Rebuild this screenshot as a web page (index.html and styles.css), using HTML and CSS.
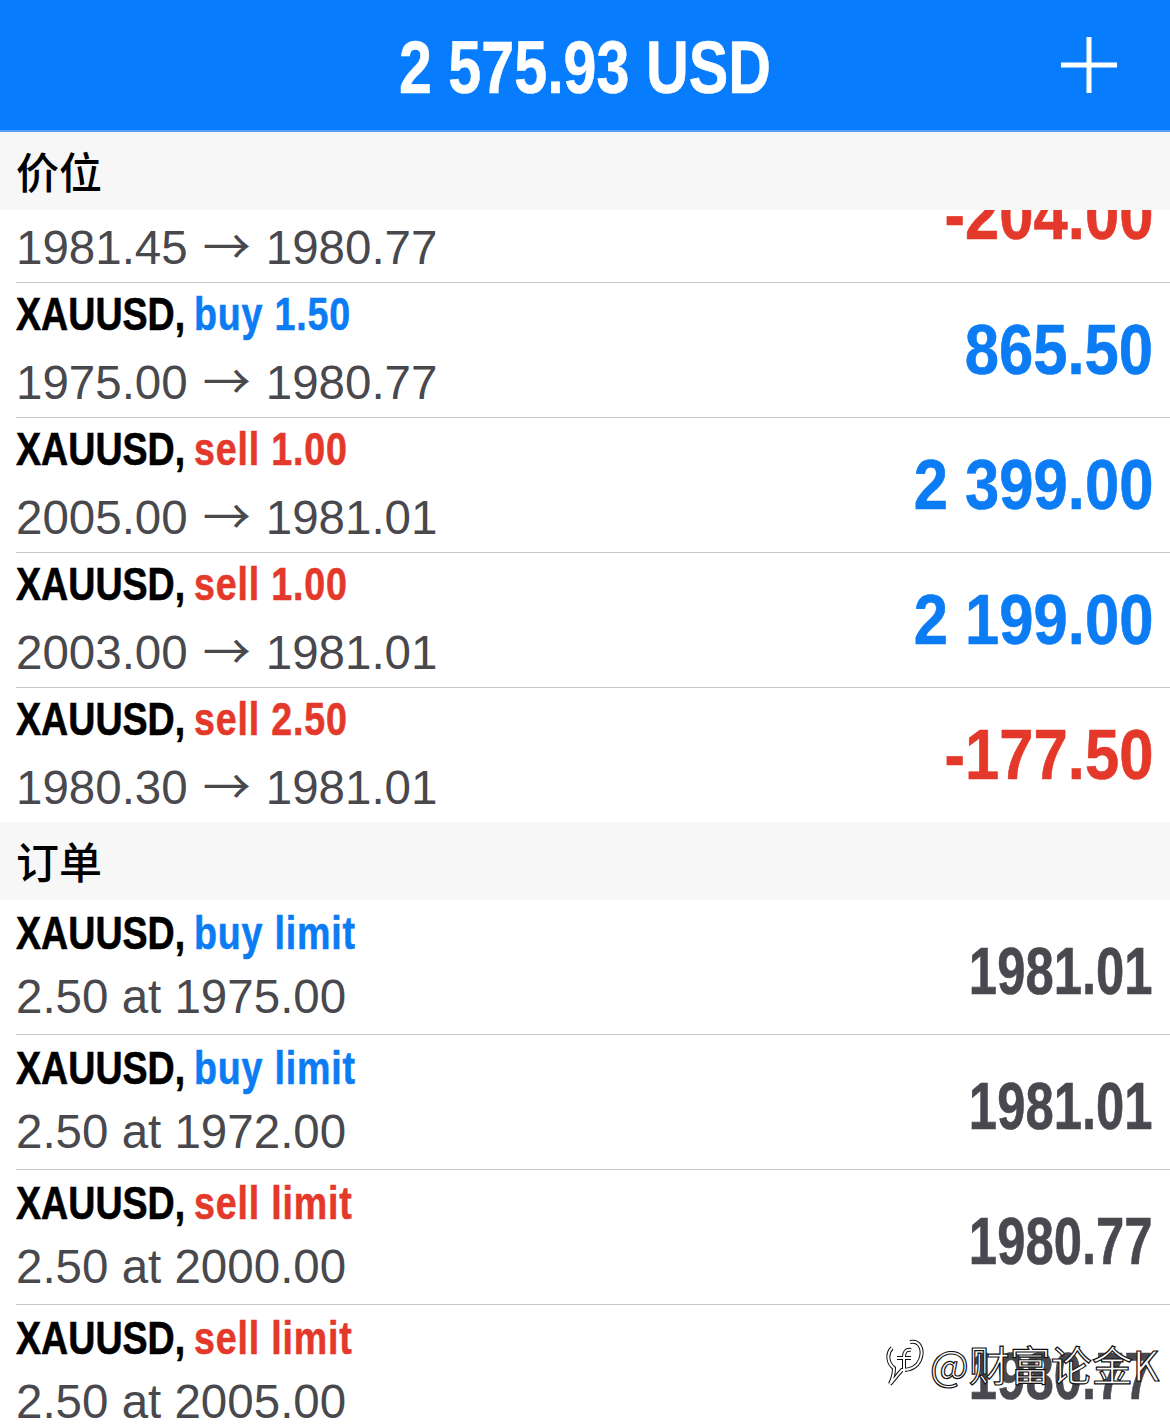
FILE: index.html
```html
<!DOCTYPE html>
<html lang="zh">
<head>
    <meta charset="UTF-8">
    <title>交易</title>
    <link rel="stylesheet" href="styles.css">
</head>
<body>
<div class="screen">
    <header class="topbar">
        <div></div>
        <div class="balance"><span class="sq">2 575.93 USD</span></div>
        <div class="add">
            <svg width="56" height="56" viewBox="0 0 56 56">
                <path d="M28 0V56M0 28H56" stroke="#fff" stroke-width="5"/>
            </svg>
        </div>
    </header>

    <div class="group-title">价位</div>
    <div class="clip">
        <div class="row">
            <div class="info">
                <div class="name"><span class="sq">XAUUSD, <span class="red">sell 1.00</span></span></div>
                <div class="price">1981.45<span class="arrow">→</span>1980.77</div>
            </div>
            <div class="profit red"><span class="sq">-204.00</span></div>
        </div>
    </div>
    <div class="row">
        <div class="info">
            <div class="name"><span class="sq">XAUUSD, <span class="blue">buy 1.50</span></span></div>
            <div class="price">1975.00<span class="arrow">→</span>1980.77</div>
        </div>
        <div class="profit blue"><span class="sq">865.50</span></div>
    </div>
    <div class="row">
        <div class="info">
            <div class="name"><span class="sq">XAUUSD, <span class="red">sell 1.00</span></span></div>
            <div class="price">2005.00<span class="arrow">→</span>1981.01</div>
        </div>
        <div class="profit blue"><span class="sq">2 399.00</span></div>
    </div>
    <div class="row">
        <div class="info">
            <div class="name"><span class="sq">XAUUSD, <span class="red">sell 1.00</span></span></div>
            <div class="price">2003.00<span class="arrow">→</span>1981.01</div>
        </div>
        <div class="profit blue"><span class="sq">2 199.00</span></div>
    </div>
    <div class="row last">
        <div class="info">
            <div class="name"><span class="sq">XAUUSD, <span class="red">sell 2.50</span></span></div>
            <div class="price">1980.30<span class="arrow">→</span>1981.01</div>
        </div>
        <div class="profit red"><span class="sq">-177.50</span></div>
    </div>

    <div class="group-title">订单</div>
    <div class="row">
        <div class="info">
            <div class="name"><span class="sq">XAUUSD, <span class="blue">buy limit</span></span></div>
            <div class="price">2.50 at 1975.00</div>
        </div>
        <div class="quote"><span class="sq">1981.01</span></div>
    </div>
    <div class="row">
        <div class="info">
            <div class="name"><span class="sq">XAUUSD, <span class="blue">buy limit</span></span></div>
            <div class="price">2.50 at 1972.00</div>
        </div>
        <div class="quote"><span class="sq">1981.01</span></div>
    </div>
    <div class="row">
        <div class="info">
            <div class="name"><span class="sq">XAUUSD, <span class="red">sell limit</span></span></div>
            <div class="price">2.50 at 2000.00</div>
        </div>
        <div class="quote"><span class="sq">1980.77</span></div>
    </div>
    <div class="row">
        <div class="info">
            <div class="name"><span class="sq">XAUUSD, <span class="red">sell limit</span></span></div>
            <div class="price">2.50 at 2005.00</div>
        </div>
        <div class="quote"><span class="sq">1980.77</span></div>
    </div>

    <div class="mark">
        <svg width="40" height="54" viewBox="0 0 40 54">
            <path class="mark-o" d="M24 6C34 4 38 14 34 24C31 31 24 34 16 34C12 38 8 44 4 48C7 42 8 37 8 32C2 28 0 18 6 12"/>
            <path class="mark-o" d="M25 14C20 13 18 16 18 21V36M11 22H25"/>
            <path class="mark-i" d="M24 6C34 4 38 14 34 24C31 31 24 34 16 34C12 38 8 44 4 48C7 42 8 37 8 32C2 28 0 18 6 12"/>
            <path class="mark-i" d="M25 14C20 13 18 16 18 21V36M11 22H25"/>
        </svg>
        <span>@财富论金K</span>
    </div>
</div>
</body>
</html>
```

FILE: styles.css
```css
*{
    box-sizing: border-box;
}
html,body{
    margin:0;
    padding:0;
    background:#fff;
}
.screen{
    position: relative;
    width:1170px;
    height:1428px;
    overflow: hidden;
    font-family: "Liberation Sans", "Noto Sans CJK SC", sans-serif;
}
/* squeeze for the condensed bold face */
.sq{
    display: inline-block;
    white-space: nowrap;
    transform: scaleX(0.8);
    transform-origin: left center;
    -webkit-text-stroke:0.6px currentColor;
}
.topbar{
    height:132px;
    background:#077cfd;
    border-bottom:2px solid #5b9ff5;
    display: grid;
    grid-template-columns: 1fr auto 1fr;
    align-items: center;
}
.balance{
    color:#fff;
    font-size:74px;
    font-weight:bold;
    line-height:74px;
    padding-top:6px;
    width:373px;
}
.add{
    justify-self: end;
    margin-right:53px;
    display: flex;
}
.group-title{
    height:78px;
    background:#f7f7f7;
    padding-left:16px;
    font-family: "Noto Sans CJK SC", sans-serif;
    font-size:43px;
    font-weight:500;
    line-height:76px;
    color:#000;
}
.clip{
    height:73px;
    overflow: hidden;
    display: flex;
    flex-direction: column;
    justify-content: flex-end;
}
.row{
    flex-shrink: 0;
    height:135px;
    margin-left:16px;
    padding-right:17px;
    border-bottom:1px solid #c8c7cc;
    display: flex;
    justify-content: space-between;
    align-items: center;
}
.row.last{
    border-bottom:0;
    height:134px;
}
.info{
    padding-bottom:4px;
}
.name{
    font-size:47px;
    font-weight:bold;
    line-height:64px;
    color:#000;
}
.name .red,
.name .blue{
    margin-left:-2px;
    letter-spacing:1px;
}
.price{
    font-size:47.5px;
    line-height:64px;
    color:#48484d;
    white-space: nowrap;
}
.arrow{
    font-family: "Noto Sans CJK SC", sans-serif;
    font-size:48px;
    margin:0 15px;
}
.blue{
    color:#0c7cf4;
}
.red{
    color:#e4392a;
}
.profit{
    font-size:70px;
    font-weight:bold;
    line-height:70px;
}
.profit .sq{
    transform: scaleX(0.88);
    transform-origin: right center;
}
.quote{
    font-size:66px;
    font-weight:bold;
    line-height:66px;
    padding-top:8px;
    color:#48484f;
}
.quote .sq{
    transform: scaleX(0.77);
    transform-origin: right center;
}
.mark{
    position: absolute;
    left:886px;
    top:1336px;
    display: flex;
    align-items: center;
    gap:4px;
    font-family: "Noto Sans CJK SC", sans-serif;
    font-size:41px;
    line-height:54px;
    color:#fff;
    -webkit-text-stroke:1.2px #111;
}
.mark-o{
    fill:none;
    stroke:#111;
    stroke-width:4;
}
.mark-i{
    fill:none;
    stroke:#fff;
    stroke-width:2;
}
```
